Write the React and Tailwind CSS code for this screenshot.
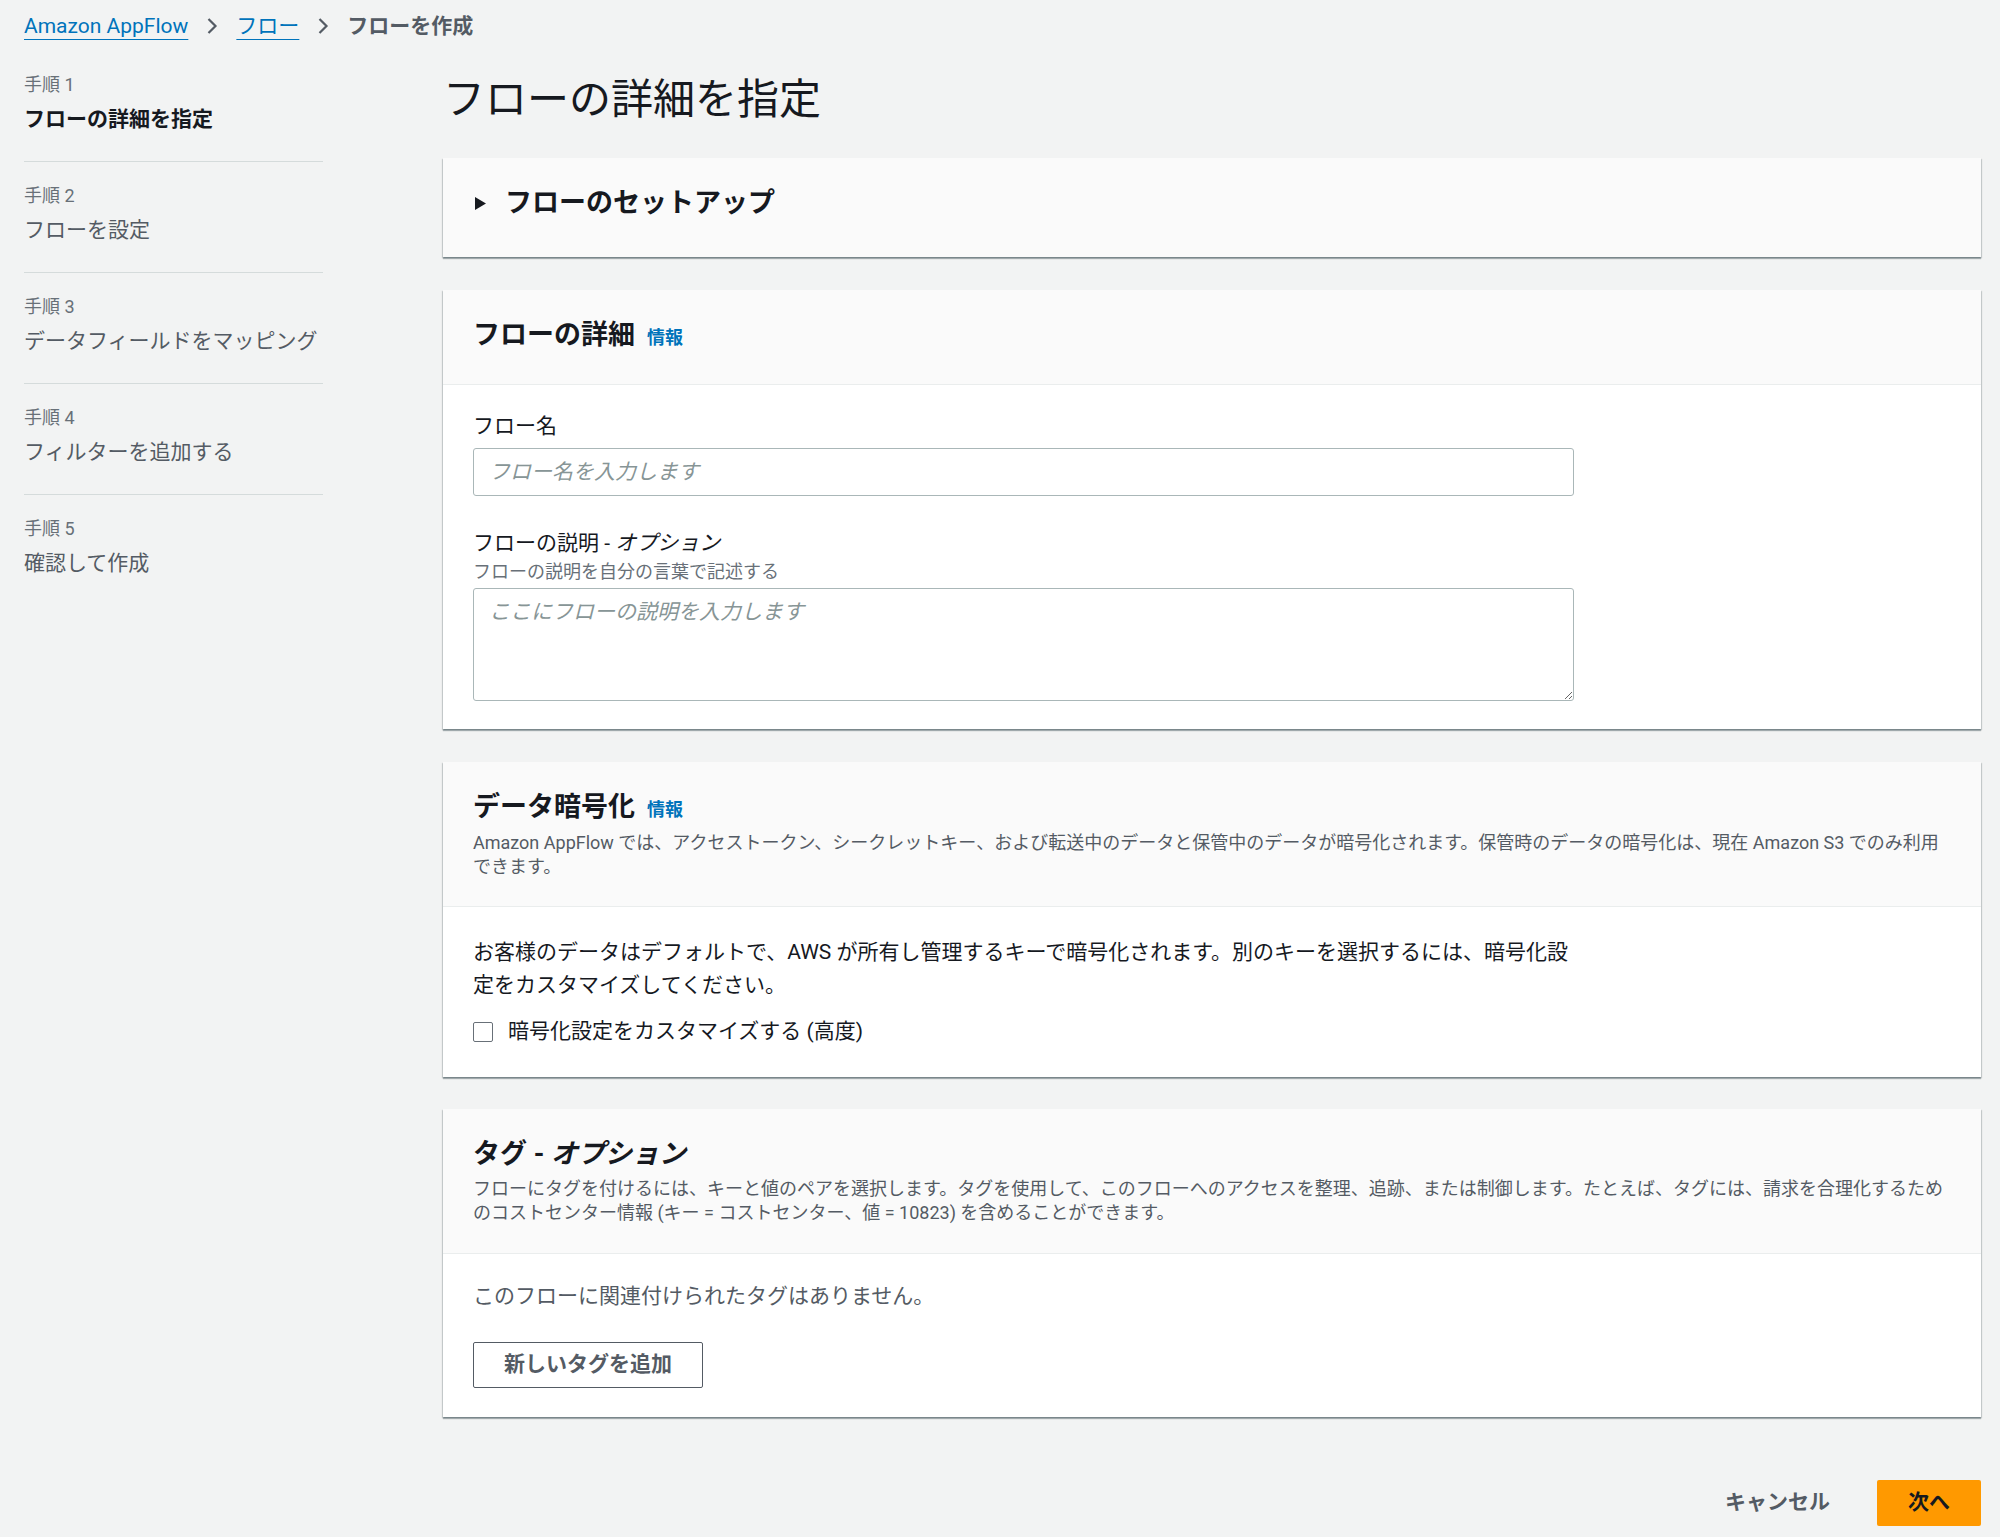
import React from "react";

const Chevron = () => (
  <svg width="12" height="18" viewBox="0 0 12 18" className="mx-[18px] shrink-0">
    <polyline points="2.5,2 9.5,9 2.5,16" fill="none" stroke="#545b64" strokeWidth="2.2" />
  </svg>
);

const steps = [
  { n: 1, t: "フローの詳細を指定", active: true },
  { n: 2, t: "フローを設定" },
  { n: 3, t: "データフィールドをマッピング" },
  { n: 4, t: "フィルターを追加する" },
  { n: 5, t: "確認して作成" },
];

const shadow =
  "shadow-[0_2px_1px_0_rgba(0,28,36,0.3),1px_1px_1px_0_rgba(0,28,36,0.15),-1px_1px_1px_0_rgba(0,28,36,0.15)]";

const Info = () => (
  <span className="ml-[12px] text-[18px] leading-none font-bold text-[#0073bb]">情報</span>
);

export default function App() {
  return (
    <div className="min-h-screen bg-[#f2f3f3] pt-[11px] pb-[13px] text-[#16191f] font-[family-name:Roboto,'Noto_Sans_CJK_JP',sans-serif]">
      {/* Breadcrumb */}
      <div className="flex h-[30px] items-center pl-[24px] text-[21px] leading-[30px]">
        <a className="text-[#0073bb] underline underline-offset-[6px] decoration-1">Amazon AppFlow</a>
        <Chevron />
        <a className="text-[#0073bb] underline underline-offset-[6px] decoration-1">フロー</a>
        <Chevron />
        <span className="font-bold text-[#545b64]">フローを作成</span>
      </div>

      <div className="flex pl-[24px] pr-[19px]">
        {/* Side nav */}
        <nav className="w-[299px] shrink-0 mt-[32px]">
          {steps.map((s, i) => (
            <div
              key={s.n}
              className={
                (i === 0 ? "pt-0 " : "pt-[22px] ") +
                (i < steps.length - 1 ? "pb-[27px] border-b border-[#d5dbdb]" : "")
              }
            >
              <div className="text-[18px] leading-[24px] text-[#687078]">手順 {s.n}</div>
              <div
                className={
                  "mt-[7px] text-[21px] leading-[30px] " +
                  (s.active ? "font-bold text-[#16191f]" : "text-[#545b64]")
                }
              >
                {s.t}
              </div>
            </div>
          ))}
        </nav>

        {/* Main */}
        <main className="ml-[120px] flex-1">
          <h1 className="mt-[34px] text-[42px] leading-[50px] font-normal text-[#16191f]">フローの詳細を指定</h1>

          {/* Card 1: setup */}
          <section className={shadow + " mt-[33px] bg-[#fafafa] px-[30px] pt-[30px] pb-[39px]"}>
            <div className="flex h-[30px] items-center text-[27px] leading-[30px] font-bold">
              <svg width="11" height="13" viewBox="0 0 11 13" className="ml-[2px] mr-[19px]">
                <polygon points="0,0 11,6.5 0,13" fill="#16191f" />
              </svg>
              フローのセットアップ
            </div>
          </section>

          {/* Card 2: flow details */}
          <section className={shadow + " mt-[33px] bg-white"}>
            <div className="bg-[#fafafa] px-[30px] pt-[30px] pb-[34px] border-b border-[#eaeded]">
              <div className="h-[30px] text-[27px] leading-[30px] font-bold">
                フローの詳細
                <Info />
              </div>
            </div>
            <div className="px-[30px] pt-[28px] pb-[28px]">
              <div className="text-[21px] leading-[27px]">フロー名</div>
              <input
                className="mt-[8px] block h-[48px] w-[1101px] rounded-[3px] border border-[#aab7b8] bg-white px-[15px] text-[21px] placeholder:italic placeholder:text-[#879596] outline-none"
                placeholder="フロー名を入力します"
              />
              <div className="mt-[34px] text-[21px] leading-[27px]">
                フローの説明 - <i>オプション</i>
              </div>
              <div className="mt-[4px] text-[18px] leading-[22px] text-[#687078]">
                フローの説明を自分の言葉で記述する
              </div>
              <textarea
                className="mt-[5px] block h-[113px] w-[1101px] rounded-[3px] border border-[#aab7b8] bg-white px-[15px] py-[9px] text-[21px] leading-[28px] placeholder:italic placeholder:text-[#879596] outline-none"
                placeholder="ここにフローの説明を入力します"
              />
            </div>
          </section>

          {/* Card 3: encryption */}
          <section className={shadow + " mt-[33px] bg-white"}>
            <div className="bg-[#fafafa] px-[30px] pt-[30px] pb-[27px] border-b border-[#eaeded]">
              <div className="h-[30px] text-[27px] leading-[30px] font-bold">
                データ暗号化
                <Info />
              </div>
              <div className="mt-[9px] text-[18px] leading-[24px] text-[#545b64]">
                <div className="whitespace-nowrap">
                  Amazon AppFlow では、アクセストークン、シークレットキー、および転送中のデータと保管中のデータが暗号化されます。保管時のデータの暗号化は、現在 Amazon S3 でのみ利用
                </div>
                <div className="whitespace-nowrap">できます。</div>
              </div>
            </div>
            <div className="px-[30px] pt-[29px] pb-[32px]">
              <div className="text-[21px] leading-[33px]">
                <div className="whitespace-nowrap">
                  お客様のデータはデフォルトで、AWS が所有し管理するキーで暗号化されます。別のキーを選択するには、暗号化設
                </div>
                <div className="whitespace-nowrap">定をカスタマイズしてください。</div>
              </div>
              <label className="mt-[17px] flex h-[26px] items-center text-[21px]">
                <span className="mr-[15px] block h-[20px] w-[20px] rounded-[2px] border border-[#687078] bg-white" />
                暗号化設定をカスタマイズする (高度)
              </label>
            </div>
          </section>

          {/* Card 4: tags */}
          <section className={shadow + " mt-[32px] bg-white"}>
            <div className="bg-[#fafafa] px-[30px] pt-[30px] pb-[28px] border-b border-[#eaeded]">
              <div className="h-[30px] text-[27px] leading-[30px] font-bold">
                タグ - <i>オプション</i>
              </div>
              <div className="mt-[8px] text-[18px] leading-[24px] text-[#545b64]">
                <div className="whitespace-nowrap">
                  フローにタグを付けるには、キーと値のペアを選択します。タグを使用して、このフローへのアクセスを整理、追跡、または制御します。たとえば、タグには、請求を合理化するため
                </div>
                <div className="whitespace-nowrap">
                  のコストセンター情報 (キー = コストセンター、値 = 10823) を含めることができます。
                </div>
              </div>
            </div>
            <div className="px-[30px] pt-[28px] pb-[29px]">
              <div className="text-[21px] leading-[28px] text-[#545b64]">
                このフローに関連付けられたタグはありません。
              </div>
              <button className="mt-[32px] h-[46px] rounded-[2px] border border-[#545b64] bg-white px-[30px] text-[21px] font-bold text-[#545b64]">
                新しいタグを追加
              </button>
            </div>
          </section>

          {/* Footer */}
          <div className="mt-[63px] flex items-center justify-end gap-[17px]">
            <button className="h-[46px] px-[30px] text-[21px] font-bold text-[#545b64]">キャンセル</button>
            <button className="h-[46px] w-[104px] rounded-[2px] bg-[#ff9900] text-[21px] font-bold text-[#16191f]">
              次へ
            </button>
          </div>
        </main>
      </div>
    </div>
  );
}
